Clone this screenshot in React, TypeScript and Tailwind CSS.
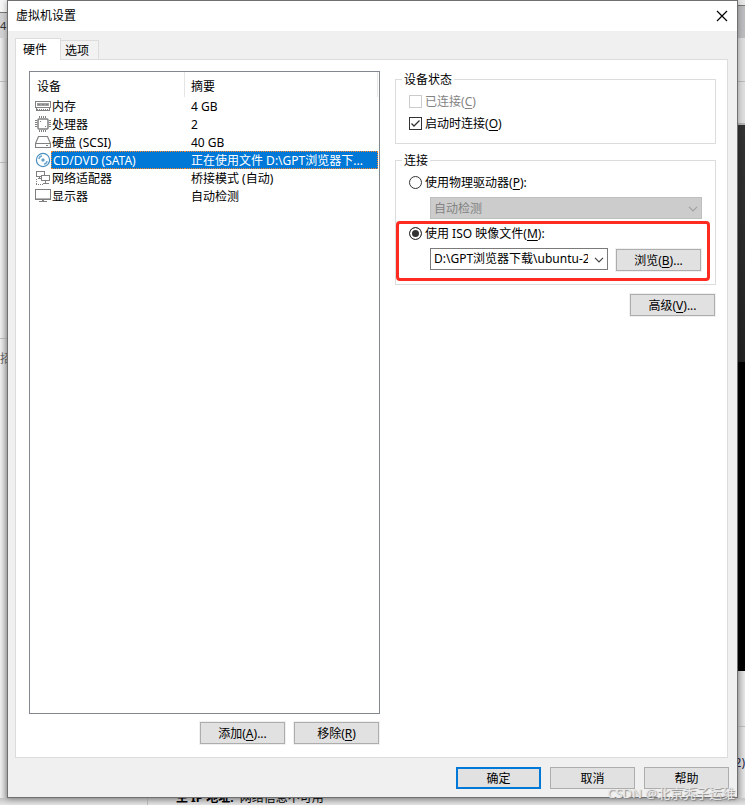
import { useState } from 'react';
import type { ReactNode } from 'react';

interface Device {
  id: string;
  name: string;
  summary: string;
  icon: ReactNode;
}

const iconClass = 'w-4 h-4 shrink-0';

const devices: Device[] = [
  {
    id: 'memory',
    name: '内存',
    summary: '4 GB',
    icon: (
      <svg viewBox="0 0 16 16" className={iconClass} fill="none" stroke="#808080" shapeRendering="crispEdges">
        <path d="M.5 3.500h15v6h-1v3h-13v-3h-1z" />
        <path d="M2 6h12" stroke="#a0a0a0" strokeWidth="3" />
        <path d="M3 6h2M7 6h2M11 6h2" />
        <path d="M1 9.500h14" />
        <path d="M2 11.500h12" strokeDasharray="1 1" />
      </svg>
    ),
  },
  {
    id: 'cpu',
    name: '处理器',
    summary: '2',
    icon: (
      <svg viewBox="0 0 16 16" className={iconClass} fill="none" stroke="#808080">
        <rect x="3" y="3" width="10" height="10" rx="1" strokeWidth="1.500" />
        <g shapeRendering="crispEdges">
          <path d="M4.500 0v2M6.500 0v2M8.500 0v2M10.500 0v2M4.500 14v2M6.500 14v2M8.500 14v2M10.500 14v2" />
          <path d="M0 4.500h2M0 6.500h2M0 8.500h2M0 10.500h2M14 4.500h2M14 6.500h2M14 8.500h2M14 10.500h2" />
          <path d="M5 5.500h1M10 10.500h1" />
        </g>
      </svg>
    ),
  },
  {
    id: 'disk',
    name: '硬盘 (SCSI)',
    summary: '40 GB',
    icon: (
      <svg viewBox="0 0 16 16" className={iconClass} fill="none" stroke="#808080" strokeWidth="1.200">
        <path d="M3.500 2.500h9l3 7v4H.5v-4zM.5 9.500h15" />
        <path d="M11 11.500h2" />
      </svg>
    ),
  },
  {
    id: 'cd',
    name: 'CD/DVD (SATA)',
    summary: '正在使用文件 D:\\GPT浏览器下...',
    icon: (
      <svg viewBox="0 0 16 16" className={iconClass} fill="none" stroke="#4a8fbf">
        <circle cx="8" cy="8" r="6.600" strokeWidth="1.200" />
        <circle cx="8" cy="8" r="1.500" fill="#4a8fbf" stroke="#a9cde6" />
        <path d="M3.800 7A4.300 4.300 0 0 1 7 3.800M12.200 9A4.300 4.300 0 0 1 9 12.200" stroke="#6aa7d0" strokeWidth="1.500" />
      </svg>
    ),
  },
  {
    id: 'network',
    name: '网络适配器',
    summary: '桥接模式 (自动)',
    icon: (
      <svg viewBox="0 0 16 16" className={iconClass} fill="none" stroke="#808080" shapeRendering="crispEdges">
        <path d="M5.500 6.500h-4v-5h8v4M3 8.500h3M4.500 7v2" />
        <rect x="6.500" y="5.500" width="8" height="5" fill="#fff" />
        <path d="M10.500 11v2M8 13.500h6" />
        <path d="M1.500 9v6M1 14.500h7" strokeDasharray="1 1" />
      </svg>
    ),
  },
  {
    id: 'display',
    name: '显示器',
    summary: '自动检测',
    icon: (
      <svg viewBox="0 0 16 16" className={iconClass} fill="none" stroke="#808080" shapeRendering="crispEdges">
        <rect x=".5" y="1.500" width="15" height="10" />
        <path d="M1 10.500h14" stroke="#b5b5b5" />
        <path d="M4 13.500h8M7 12.500h2" />
      </svg>
    ),
  },
];

function Key({ children }: { children: string }) {
  return (
    <>
      (<span className="underline underline-offset-2">{children}</span>)
    </>
  );
}

function PushButton({ children, primary }: { children: ReactNode; primary?: boolean }) {
  return (
    <button
      type="button"
      className={
        primary
          ? 'w-[85px] h-[22px] shrink-0 flex items-center justify-center bg-[#e1e1e1] border-2 border-[#0078d7]'
          : 'w-[85px] h-[22px] shrink-0 flex items-center justify-center bg-[#e1e1e1] border border-[#adadad] shadow-[0_0_0_1px_#f0f0f0]'
      }
    >
      <span className="pt-[2px]">{children}</span>
    </button>
  );
}

function Chevron({ color }: { color: string }) {
  return (
    <svg
      viewBox="0 0 10 6"
      className="absolute right-1 top-[9px] w-[10px] h-[6px] pointer-events-none"
      fill="none"
      stroke={color}
      strokeWidth="1.200"
    >
      <path d="M1 .8l4 4 4-4" />
    </svg>
  );
}

// parts of the VMware main window that show around the dialog
function Backdrop() {
  return (
    <div className="absolute inset-0 flex justify-between bg-[#f0f0f0] overflow-hidden" aria-hidden="true">
      <div className="w-[7px] flex flex-col overflow-hidden bg-linear-to-r from-[#f0f0f0] to-[#c4c4c4] whitespace-nowrap">
        <div className="h-3 bg-[#f6f6f6]" />
        <div className="h-[26px] pt-[5px] border-t border-[#777] bg-[#d2d2d4] text-[11px] leading-4 text-[#333]">4</div>
        <div className="h-11 border-b border-[#bbb]" />
        <div className="h-[81px] border-b border-[#bbb]" />
        <div className="h-44 border-b border-[#bbb]" />
        <div className="pt-3 text-[#666]">招</div>
      </div>
      <div className="w-[7px] flex flex-col overflow-hidden bg-linear-to-r from-[#c8c8c8] to-[#e6e6e6] whitespace-nowrap">
        <div className="h-[6px] border-b border-[#777] bg-[#e8e8e8]" />
        <div className="h-8 bg-[#bdbdc0]" />
        <div className="h-11 border-b border-[#bbb] bg-[#dedede]" />
        <div className="h-[43px] border-b-2 border-[#b5b5b5] bg-[#dedede]" />
        <div className="h-[237px] bg-linear-to-b from-[#333] to-[#222]" />
        <div className="h-[309px] bg-black" />
        <div className="h-[56px] border-b border-[#bbb]" />
        <div className="pt-7 flex justify-end text-[#224]">
          <span>2)</span>
        </div>
      </div>
      <div className="absolute inset-x-0 bottom-0 h-[7px] overflow-hidden bg-linear-to-b from-[#c4c4c4] to-[#e4e4e4]">
        <div className="ml-[147px] pl-7 -mt-2 border-l border-[#bbb] text-black leading-4">
          <b>主 IP 地址:</b>
          <span className="ml-1.5">网络信息不可用</span>
        </div>
      </div>
    </div>
  );
}

export default function App() {
  const [selected, setSelected] = useState('cd');
  const [connectAtStart, setConnectAtStart] = useState(true);
  const [source, setSource] = useState('iso');

  return (
    <div className="relative min-h-screen flex flex-col pl-[7px] pr-[7px] pb-[7px] text-[12px] leading-4 text-black font-['Noto_Sans','Noto_Sans_CJK_SC',sans-serif]">
      <Backdrop />

      <main className="relative flex-1 flex flex-col bg-[#f0f0f0] border border-[#707070] shadow-[0_1px_6px_rgba(0,0,0,0.35)]">
        <header className="h-[30px] pl-2 pr-[9px] flex items-center justify-between bg-white">
          <h1>虚拟机设置</h1>
          <button type="button" aria-label="关闭" className="w-3 h-3">
            <svg viewBox="0 0 12 12" className="w-3 h-3" stroke="#000" strokeWidth="1.200">
              <path d="M1 1l10 10M11 1L1 11" />
            </svg>
          </button>
        </header>

        <div className="flex-1 flex flex-col pt-[7px] pl-[7px] pr-[9px]">
          <div className="flex items-end" role="tablist">
            <button
              type="button"
              role="tab"
              aria-selected="true"
              className="relative z-10 -mb-px h-[22px] w-[46px] pl-[7px] text-left bg-white border border-b-0 border-[#dcdcdc]"
            >
              硬件
            </button>
            <button
              type="button"
              role="tab"
              aria-selected="false"
              className="h-[19px] w-[38px] pl-1 pt-[2px] text-left bg-[#f2f2f2] border border-l-0 border-b-0 border-[#dcdcdc]"
            >
              选项
            </button>
          </div>

          <div className="flex-1 flex bg-white border border-[#dcdcdc] pt-[11px] pb-[13px] pl-[13px] pr-[11px] gap-[15px]">
            <section className="flex-1 min-w-0 flex flex-col gap-2">
              <div className="flex-1 border border-[#828790]">
                <table className="w-full table-fixed border-separate border-spacing-0 border-r border-white">
                  <colgroup>
                    <col className="w-[155px]" />
                    <col />
                  </colgroup>
                  <thead>
                    <tr className="h-[25px]">
                      <th className="p-0 pl-[7px] pt-[5px] font-normal text-left border-r border-[#e5e5e5]">设备</th>
                      <th className="p-0 pl-[6px] pt-[5px] font-normal text-left border-r border-[#e5e5e5]">摘要</th>
                    </tr>
                  </thead>
                  <tbody>
                    {devices.map(device => {
                      const active = device.id === selected;
                      return (
                        <tr key={device.id} onClick={() => setSelected(device.id)} className="h-[18px]">
                          <td className="p-0 pl-[5px]">
                            <div className="flex items-center">
                              {device.icon}
                              <span
                                className={
                                  active
                                    ? 'flex-1 h-[18px] pl-px leading-[18px] bg-[#0078d7] text-white border border-r-0 border-dotted border-[#ff8728] whitespace-nowrap'
                                    : 'flex-1 h-[18px] leading-[18px] border border-r-0 border-transparent whitespace-nowrap'
                                }
                              >
                                {device.name}
                              </span>
                            </div>
                          </td>
                          <td
                            className={
                              active
                                ? 'p-0 pl-[6px] bg-[#0078d7] text-white border border-l-0 border-dotted border-[#ff8728] whitespace-nowrap'
                                : 'p-0 pl-[6px] border border-l-0 border-transparent whitespace-nowrap'
                            }
                          >
                            <div className="h-4 leading-[18px]">{device.summary}</div>
                          </td>
                        </tr>
                      );
                    })}
                  </tbody>
                </table>
              </div>
              <div className="flex justify-end gap-[9px] pr-px">
                <PushButton>添加<Key>A</Key>...</PushButton>
                <PushButton>移除<Key>R</Key></PushButton>
              </div>
            </section>

            <section className="w-[321px] shrink-0 flex flex-col">
              <fieldset className="border border-[#dcdcdc] px-[6px] pt-[3px] pb-[9px]">
                <legend className="px-[2px] h-4 leading-[18px]">设备状态</legend>
                <label className="flex items-center gap-[3px] h-[22px] pl-[7px] text-[#838383]">
                  <input
                    type="checkbox"
                    disabled
                    className="appearance-none w-[13px] h-[13px] bg-white border border-[#cccccc]"
                  />
                  <span className="pt-px">已连接<Key>C</Key></span>
                </label>
                <label className="relative flex items-center gap-[3px] h-[22px] pl-[7px]">
                  <input
                    type="checkbox"
                    checked={connectAtStart}
                    onChange={e => setConnectAtStart(e.target.checked)}
                    className="appearance-none w-[13px] h-[13px] bg-white border border-[#333]"
                  />
                  {connectAtStart && (
                    <svg
                      viewBox="0 0 13 13"
                      className="absolute left-[7px] w-[13px] h-[13px] pointer-events-none"
                      fill="none"
                      stroke="#333"
                      strokeWidth="1.300"
                    >
                      <path d="M2.500 6.500L5 9l5.500-5.500" />
                    </svg>
                  )}
                  <span className="pt-px">启动时连接<Key>O</Key></span>
                </label>
              </fieldset>

              <fieldset className="mt-2 border border-[#dcdcdc] px-[6px] pt-[3px] pb-[14px]">
                <legend className="px-[2px] h-4 leading-[18px]">连接</legend>
                <label className="flex items-center gap-[3px] h-[22px] pl-[7px]">
                  <input
                    type="radio"
                    name="source"
                    checked={source === 'physical'}
                    onChange={() => setSource('physical')}
                    className="appearance-none w-[13px] h-[13px] rounded-full bg-white border border-[#333] checked:shadow-[inset_0_0_0_2px_#fff] checked:bg-[#333]"
                  />
                  <span className="pt-px">使用物理驱动器<Key>P</Key>:</span>
                </label>
                <div className="relative mt-1 ml-7 mr-[7px]">
                  <select
                    disabled
                    aria-label="物理驱动器"
                    className="block appearance-none w-full h-[22px] pl-[3px] pr-5 pt-[2px] bg-[#cccccc] border border-[#bfbfbf] text-[#838383] opacity-100"
                  >
                    <option>自动检测</option>
                  </select>
                  <Chevron color="#a0a0a0" />
                </div>

                <div className="relative mt-[3px]">
                  <label className="flex items-center gap-[3px] h-[22px] pl-[7px]">
                    <input
                      type="radio"
                      name="source"
                      checked={source === 'iso'}
                      onChange={() => setSource('iso')}
                      className="appearance-none w-[13px] h-[13px] rounded-full bg-white border border-[#333] checked:shadow-[inset_0_0_0_2px_#fff] checked:bg-[#333]"
                    />
                    <span className="pt-px">使用 ISO 映像文件<Key>M</Key>:</span>
                  </label>
                  <div className="flex items-start gap-2 mt-1 ml-7 mr-2">
                    <div className="relative flex-1 min-w-0">
                      <select
                        aria-label="ISO 映像文件"
                        className="block appearance-none w-full h-[22px] pl-[3px] pr-[19px] bg-white border border-[#7a7a7a]"
                      >
                        <option>D:\GPT浏览器下载\ubuntu-2</option>
                      </select>
                      <Chevron color="#444" />
                    </div>
                    <div className="pt-px -mb-px flex">
                      <PushButton>浏览<Key>B</Key>...</PushButton>
                    </div>
                  </div>
                  <div className="absolute -left-[6px] -right-px -top-px -bottom-[11px] border-3 border-[#ff2a20] rounded-[4px] pointer-events-none" />
                </div>
              </fieldset>

              <div className="flex justify-end mt-[9px] pr-px">
                <PushButton>高级<Key>V</Key>...</PushButton>
              </div>
            </section>
          </div>
        </div>

        <footer className="flex justify-end gap-[9px] pt-[9px] pb-2 pr-2">
          <PushButton primary>确定</PushButton>
          <PushButton>取消</PushButton>
          <PushButton>帮助</PushButton>
        </footer>
      </main>

      <div className="absolute right-[10px] bottom-1 text-[13px] leading-4 text-[#e8e8e8] pointer-events-none whitespace-nowrap [text-shadow:1px_1px_1px_#888]">
        CSDN @北京秃子运维
      </div>
    </div>
  );
}
